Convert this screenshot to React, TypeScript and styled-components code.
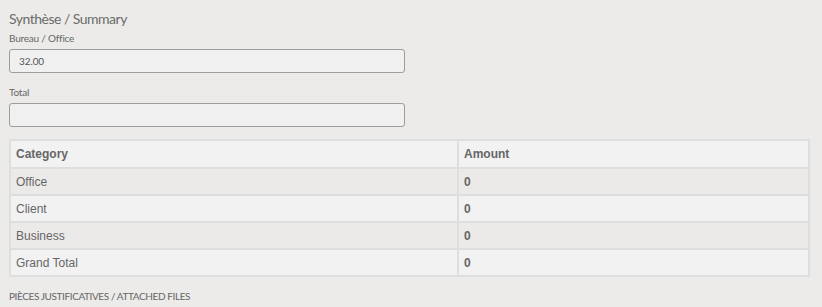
import styled, { createGlobalStyle } from "styled-components";

const GlobalStyle = createGlobalStyle`
  html, body {
    margin: 0;
    padding: 0;
    background: #ecebe9;
  }
  body {
    font-family: Lato, "Noto Sans", sans-serif;
    color: #666;
  }
`;

const Page = styled.div`
  padding: 9px 12px 0 9px;
  width: 801px;
`;

const Heading = styled.h3`
  margin: 0;
  font-size: 14px;
  font-weight: 400;
  letter-spacing: -0.5px;
  line-height: 20px;
  color: #6b6b6b;
`;

const Field = styled.div<{ $gap: number }>`
  display: flex;
  flex-direction: column;
  margin-top: ${(p) => p.$gap}px;
  width: 396px;
`;

const Label = styled.label`
  font-size: 10px;
  letter-spacing: -0.2px;
  line-height: 14px;
  color: #666;
  margin-bottom: 4px;
`;

const Input = styled.div`
  box-sizing: border-box;
  height: 24px;
  border: 1px solid #9d9d9d;
  border-radius: 3px;
  background: #f0f0f0;
  padding: 0 9px;
  font-size: 10px;
  letter-spacing: -0.1px;
  line-height: 22px;
  color: #555;
`;

const Table = styled.table`
  margin-top: 12px;
  width: 801px;
  border-collapse: collapse;
  border: 2px solid #d3d3d3;
  font-family: "Liberation Sans", Arial, sans-serif;
  font-size: 12px;
  color: #666;
`;

const Row = styled.tr<{ $shade?: boolean }>`
  background: ${(p) => (p.$shade ? "#ebeae8" : "#f2f2f2")};
`;

const Cell = styled.td<{ $bold?: boolean; $head?: boolean }>`
  height: ${(p) => (p.$head ? 26 : 25)}px;
  padding: 0 5px;
  border: 2px solid #dedede;
  font-weight: ${(p) => (p.$bold ? 700 : 400)};
  &:first-child {
    width: 436px;
  }
`;

const Footer = styled.div`
  margin-top: 12px;
  font-size: 10px;
  letter-spacing: -0.4px;
  line-height: 14px;
  color: #666;
`;

const rows = [
  { label: "Office", amount: "0" },
  { label: "Client", amount: "0" },
  { label: "Business", amount: "0" },
  { label: "Grand Total", amount: "0" },
];

export default function App() {
  return (
    <>
      <GlobalStyle />
      <Page>
        <Heading>Synthèse / Summary</Heading>
        <Field $gap={2}>
          <Label>Bureau / Office</Label>
          <Input>32.00</Input>
        </Field>
        <Field $gap={12}>
          <Label>Total</Label>
          <Input />
        </Field>
        <Table>
          <tbody>
            <Row>
              <Cell $bold $head>Category</Cell>
              <Cell $bold $head>Amount</Cell>
            </Row>
            {rows.map((r, i) => (
              <Row key={r.label} $shade={i % 2 === 0}>
                <Cell>{r.label}</Cell>
                <Cell $bold>{r.amount}</Cell>
              </Row>
            ))}
          </tbody>
        </Table>
        <Footer>PIÈCES JUSTIFICATIVES / ATTACHED FILES</Footer>
      </Page>
    </>
  );
}
